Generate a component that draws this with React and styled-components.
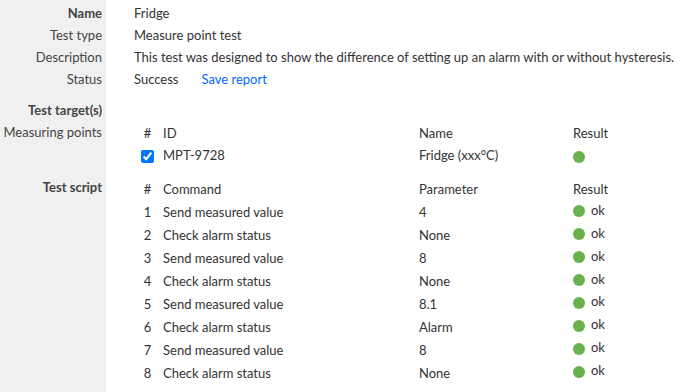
import React from "react";
import styled, { createGlobalStyle } from "styled-components";

const GlobalStyle = createGlobalStyle`
  body {
    margin: 0;
    font-family: Lato, "Open Sans", sans-serif;
    font-size: 13px;
    color: #333;
    background: #fff;
  }
`;

const targets = [{ id: "MPT-9728", name: "Fridge (xxx°C)" }];

const steps = [
  { command: "Send measured value", parameter: "4" },
  { command: "Check alarm status", parameter: "None" },
  { command: "Send measured value", parameter: "8" },
  { command: "Check alarm status", parameter: "None" },
  { command: "Send measured value", parameter: "8.1" },
  { command: "Check alarm status", parameter: "Alarm" },
  { command: "Send measured value", parameter: "8" },
  { command: "Check alarm status", parameter: "None" },
];

function App() {
  return (
    <>
      <GlobalStyle />
      <Sheet>
        <Label $bold>Name</Label>
        <Value>Fridge</Value>
        <Label>Test type</Label>
        <Value>Measure point test</Value>
        <Label>Description</Label>
        <Value>
          This test was designed to show the difference of setting up an alarm
          with or without hysteresis.
        </Value>
        <Label>Status</Label>
        <Value>
          Success
          <SaveLink href="#">Save report</SaveLink>
        </Value>

        <Label $bold $spaced>
          Test target(s)
        </Label>
        <Value $spaced />
        <Label>Measuring points</Label>
        <TableCell>
          <Table>
            <thead>
              <tr>
                <Num>#</Num>
                <Th $w={256}>ID</Th>
                <Th $w={154}>Name</Th>
                <Th>Result</Th>
              </tr>
            </thead>
            <tbody>
              {targets.map((t) => (
                <tr key={t.id}>
                  <Num>
                    <Check type="checkbox" checked readOnly />
                  </Num>
                  <Td>{t.id}</Td>
                  <Td>{t.name}</Td>
                  <Td>
                    <Dot />
                  </Td>
                </tr>
              ))}
            </tbody>
          </Table>
        </TableCell>

        <Label $bold $top>
          Test script
        </Label>
        <TableCell $script>
          <Table $rowH={22.9}>
            <thead>
              <tr>
                <Num>#</Num>
                <Th $w={256}>Command</Th>
                <Th $w={154}>Parameter</Th>
                <Th>Result</Th>
              </tr>
            </thead>
            <tbody>
              {steps.map((s, i) => (
                <tr key={i}>
                  <Num>{i + 1}</Num>
                  <Td>{s.command}</Td>
                  <Td>{s.parameter}</Td>
                  <Td>
                    <Result>
                      <Dot />
                      <span>ok</span>
                    </Result>
                  </Td>
                </tr>
              ))}
            </tbody>
          </Table>
        </TableCell>
      </Sheet>
    </>
  );
}

export default App;

const Sheet = styled.div`
  display: grid;
  grid-template-columns: 106px 1fr;
  align-content: start;
  min-height: 392px;
  padding-top: 2px;
  box-sizing: border-box;
  background: linear-gradient(to right, #f0f0f0 106px, #fff 106px);
`;

const Label = styled.div`
  text-align: right;
  padding-right: 4px;
  line-height: 22px;
  white-space: nowrap;
  color: #444;
  font-weight: ${(p) => (p.$bold ? 700 : 400)};
  margin-top: ${(p) => (p.$spaced ? "9px" : "0")};
  padding-top: ${(p) => (p.$top ? "1px" : "0")};
`;

const Value = styled.div`
  padding-left: 28px;
  line-height: 22px;
  white-space: nowrap;
  margin-top: ${(p) => (p.$spaced ? "9px" : "0")};
`;

const SaveLink = styled.a`
  color: #0066ff;
  text-decoration: none;
  margin-left: 23px;
`;

const TableCell = styled.div`
  padding-left: 28px;
  padding-top: ${(p) => (p.$script ? "3px" : "1px")};
  padding-bottom: ${(p) => (p.$script ? "0" : "9px")};
`;

const Table = styled.table`
  border-collapse: collapse;

  td,
  th {
    padding: 0 2px;
    height: ${(p) => p.$rowH || 22}px;
    vertical-align: middle;
  }
`;

const Th = styled.th`
  font-weight: 400;
  text-align: left;
  width: ${(p) => (p.$w ? `${p.$w - 4}px` : "auto")};
`;

const Td = styled.td`
  text-align: left;
`;

const Num = styled.td`
  width: 23px;
  text-align: center;
`;

const Check = styled.input`
  margin: 0;
  width: 13px;
  height: 13px;
  vertical-align: middle;
  accent-color: #0075ff;
`;

const Dot = styled.span`
  display: inline-block;
  width: 12px;
  height: 12px;
  border-radius: 50%;
  background: #6ab04c;
  vertical-align: middle;
`;

const Result = styled.span`
  display: inline-flex;
  align-items: center;
  gap: 6px;

  span:last-child {
    margin-top: -3px;
  }
`;
